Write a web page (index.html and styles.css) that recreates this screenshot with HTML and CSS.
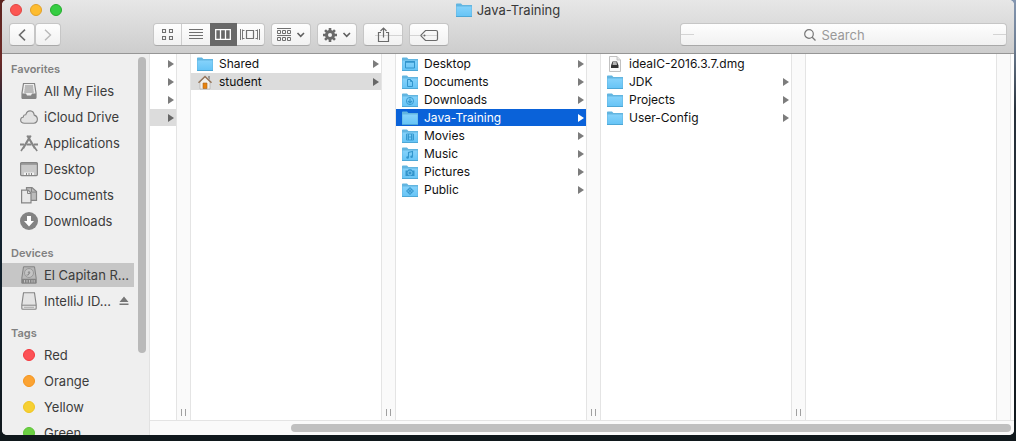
FILE: index.html
```html
<!DOCTYPE html>
<html lang="en">
<head>
<meta charset="utf-8">
<title>Java-Training</title>
<link rel="stylesheet" href="styles.css">
</head>
<body>
<svg class="sprites" aria-hidden="true">
  <defs>
    <linearGradient id="folder-fill" x1="0" y1="0" x2="0" y2="1"><stop offset="0" stop-color="#85d2fb"/><stop offset="1" stop-color="#66c4f6"/></linearGradient>
  </defs>
  <symbol id="folder" viewBox="0 0 16 14">
    <path d="M0 1.2Q0 .4.8.4H5l1.4 1.7H16V14H0z" fill="#62b5e0"/>
    <path d="M.5 3.5h15v9.8H.5z" fill="url(#folder-fill)"/>
    <path d="M0 13.5h16" stroke="#4da7d6"/>
  </symbol>
  <symbol id="arrow" viewBox="0 0 6 8"><path d="M0 0l6 4L0 8z" fill="currentColor"/></symbol>
</svg>
<main class="window">
  <header class="titlebar">
    <div class="title-row">
      <div class="lights">
        <button class="light close" aria-label="Close"></button>
        <button class="light minimize" aria-label="Minimize"></button>
        <button class="light zoom" aria-label="Zoom"></button>
      </div>
      <h1 class="title"><svg class="folder"><use href="#folder"/></svg>Java-Training</h1>
    </div>
    <div class="toolbar">
      <div class="nav">
        <button class="tool nav-button" aria-label="Back"><svg width="8" height="12" viewBox="0 0 8 12"><path d="M7 .7L1.500 6 7 11.300" fill="none" stroke="#6e6e6e" stroke-width="1.600"/></svg></button>
        <button class="tool nav-button" aria-label="Forward"><svg width="8" height="12" viewBox="0 0 8 12"><path d="M1 .7L6.500 6 1 11.300" fill="none" stroke="#b9b9b9" stroke-width="1.400"/></svg></button>
      </div>
      <div class="views">
        <button class="view" aria-label="Icon view"><svg width="11" height="11" viewBox="0 0 11 11"><path d="M.5.500h3v3h-3zM7.500.500h3v3h-3zM.5 7.500h3v3h-3zM7.500 7.500h3v3h-3z" fill="none" stroke="#707070" stroke-width="1.100"/></svg></button>
        <button class="view" aria-label="List view"><svg width="14" height="11" viewBox="0 0 14 11"><path d="M0 .5h14M0 3.500h14M0 6.500h14M0 9.500h14" stroke="#707070"/></svg></button>
        <button class="view active" aria-label="Column view" aria-pressed="true"><svg width="16" height="11" viewBox="0 0 16 11"><path d="M.7.7h14.600v9.600H.7zM5.500 1v9M10.500 1v9" fill="none" stroke="#fff" stroke-width="1.300"/></svg></button>
        <button class="view" aria-label="Cover flow view"><svg width="20" height="11" viewBox="0 0 20 11"><path d="M6.500 1.500h7v8h-7z" fill="none" stroke="#707070" stroke-width="1.200"/><path d="M.5 0v11M19.500 0v11M2.500 .5v10M17.500 .5v10M4.500 1.500h-2M4.500 9.500h-2M15.500 1.500h2M15.500 9.500h2" fill="none" stroke="#777"/></svg></button>
      </div>
      <button class="tool" aria-label="Arrange"><svg width="28" height="14" viewBox="0 0 28 14"><path d="M0 .5h14M0 7.500h14" stroke="#707070"/><path d="M.5 2.500h3v3h-3zM5.500 2.500h3v3h-3zM10.500 2.500h3v3h-3zM.5 9.500h3v3h-3zM5.500 9.500h3v3h-3zM10.500 9.500h3v3h-3z" fill="none" stroke="#707070"/><path d="M20.500 5l3.200 3.300L27 5" fill="none" stroke="#606060" stroke-width="1.600"/></svg></button>
      <button class="tool" aria-label="Action"><svg width="28" height="14" viewBox="0 0 28 14"><g stroke="#6a6a6a" stroke-width="2.600"><path d="M7 0v14M0 7h14M2.050 2.050l9.900 9.900M11.950 2.050l-9.900 9.900"/></g><circle cx="7" cy="7" r="5" fill="#6a6a6a"/><circle cx="7" cy="7" r="2" fill="#f4f4f4"/><path d="M20.500 5l3.200 3.300L27 5" fill="none" stroke="#606060" stroke-width="1.600"/></svg></button>
      <button class="tool share" aria-label="Share"><svg width="38" height="16" viewBox="0 0 38 16"><path d="M11 8.500h27" stroke="#d4d4d4"/><path d="M17 5.500h-2.500v9h10v-9H22" fill="none" stroke="#6a6a6a" stroke-width="1.200"/><path d="M19.500 10.500V1M16.500 4l3-3 3 3" fill="none" stroke="#6a6a6a" stroke-width="1.200"/></svg></button>
      <button class="tool share" aria-label="Edit tags"><svg width="38" height="16" viewBox="0 0 38 16"><path d="M0 8.500h27" stroke="#d4d4d4"/><path d="M15.500 3.500H26q1.500 0 1.500 1.500v7q0 1.500-1.500 1.500H15.500L11.200 9.200q-.6-.7 0-1.400z" fill="none" stroke="#6a6a6a" stroke-width="1.200"/><circle cx="14.500" cy="8.500" r="1" fill="#6a6a6a"/></svg></button>
      <label class="search">
        <svg width="12" height="12" viewBox="0 0 12 12"><circle cx="5" cy="5" r="4.300" fill="none" stroke="#777" stroke-width="1.200"/><path d="M8.200 8.200l3.300 3.300" stroke="#777" stroke-width="1.300"/></svg>
        <input type="text" placeholder="Search" aria-label="Search">
      </label>
    </div>
  </header>
  <div class="content">
    <nav class="sidebar">
      <div class="places">
        <section>
          <h2>Favorites</h2>
          <a class="place" href="#"><svg class="glyph" viewBox="0 0 18 18"><path d="M3.500 1.500h11L16 11v4.500q0 1-1 1H3q-1 0-1-1V11z" fill="#ededed" stroke="#858585" stroke-width="1.200"/><path d="M5 4h8M4.800 6h8.400M4.500 8h9M4.200 10h9.600" stroke="#858585"/><path d="M2 11.500h4l1 2h4l1-2h4v5H2z" fill="#858585"/></svg>All My Files</a>
          <a class="place" href="#"><svg class="glyph" viewBox="0 0 18 18"><path d="M4.500 15.200q-3.700 0-3.900-3.200.1-2.600 2.800-3 .1-2.400 2.400-2.300Q7 2.800 10.200 2.900q3.600.3 4 4.200 3.100.8 3.200 4-.2 3.900-3.700 4.100z" fill="#e2e2e2" stroke="#858585" stroke-width="1.100"/></svg>iCloud Drive</a>
          <a class="place" href="#"><svg class="glyph" viewBox="0 0 18 18"><path d="M7.300 1.500L15 14.500M10.700 1.500L3 14.500" stroke="#858585" stroke-width="2.200"/><path d="M0 10.500h4M6.500 10.500h5M14 10.500h4" stroke="#858585" stroke-width="2"/><path d="M3 14l-2 3M15 14l2.200 3" fill="none" stroke="#858585" stroke-width="1.600"/></svg>Applications</a>
          <a class="place" href="#"><svg class="glyph" viewBox="0 0 18 18"><rect x=".6" y="2.600" width="16.800" height="13" rx="1" fill="#c9c9c9" stroke="#858585" stroke-width="1.200"/><path d="M1 4h16" stroke="#777" stroke-width="1"/><path d="M4 15v-2.500h10V15z" fill="#f2f2f2"/><path d="M6.500 13v2M9 13v2M11.500 13v2" stroke="#858585"/></svg>Desktop</a>
          <a class="place" href="#"><svg class="glyph" viewBox="0 0 18 18"><path d="M6.500 1.600H12l4.500 4v8.800h-10z" fill="#bcbcbc" stroke="#858585" stroke-width="1.200"/><path d="M11.500 1.600v4.500h5" fill="none" stroke="#858585"/><path d="M1.600 4.100H8l3 3v9.800H1.600z" fill="#e8e8e8" stroke="#858585" stroke-width="1.200"/><path d="M7.500 4v3.500H11" fill="none" stroke="#858585"/></svg>Documents</a>
          <a class="place" href="#"><svg class="glyph" viewBox="0 0 18 18"><circle cx="9" cy="9" r="9" fill="#838383"/><path d="M7 4h4v5h3l-5 5.500L4 9h3z" fill="#fff"/></svg>Downloads</a>
        </section>
        <section>
          <h2>Devices</h2>
          <a class="place selected" href="#" aria-current="true"><svg class="glyph" viewBox="0 0 18 18"><path d="M3.500.8h11l1.700 11.400v5H1.800v-5z" fill="#b8b8b8" stroke="#828282"/><circle cx="9" cy="7" r="4.500" fill="#c4c4c4" stroke="#999"/><path d="M6.500 9q2 1 3-2" fill="none" stroke="#888"/><circle cx="9" cy="6.500" r="1.200" fill="#929292"/><path d="M2 12.800h14v4.200H2z" fill="#838383"/><path d="M4.500 14v2.500M7 14v2.500M9.500 14v2.500M12 14v2.500M14.200 14v2.500" stroke="#c0c0c0"/></svg>El Capitan R...</a>
          <a class="place" href="#"><svg class="glyph" viewBox="0 0 18 18"><path d="M3.500.8h11l1.700 12v3.500q0 1-1 1H2.800q-1 0-1-1v-3.500z" fill="#e4e4e4" stroke="#858585" stroke-width="1.100"/><path d="M2 13.200h14" stroke="#858585"/><path d="M4 15.300h10" stroke="#aaa"/></svg>IntelliJ ID...<svg class="eject" viewBox="0 0 10 10"><path d="M5 .5L9.500 6h-9zM.5 7.500h9v1.500h-9z" fill="#767676"/></svg></a>
        </section>
        <section>
          <h2>Tags</h2>
          <a class="place" href="#"><span class="tag red"></span>Red</a>
          <a class="place" href="#"><span class="tag orange"></span>Orange</a>
          <a class="place" href="#"><span class="tag yellow"></span>Yellow</a>
          <a class="place" href="#"><span class="tag green"></span>Green</a>
        </section>
      </div>
      <div class="side-scroll"></div>
    </nav>
    <div class="browser">
      <div class="columns">
        <div class="column clipped">
          <button class="row" aria-label="Folder 1"><svg class="arrow"><use href="#arrow"/></svg></button>
          <button class="row" aria-label="Folder 2"><svg class="arrow"><use href="#arrow"/></svg></button>
          <button class="row" aria-label="Folder 3"><svg class="arrow"><use href="#arrow"/></svg></button>
          <button class="row open" aria-label="Folder 4"><svg class="arrow"><use href="#arrow"/></svg></button>
        </div>
        <div class="divider"><i class="grip"></i></div>
        <div class="column">
          <button class="row"><svg class="folder"><use href="#folder"/></svg>Shared<svg class="arrow"><use href="#arrow"/></svg></button>
          <button class="row open"><svg class="file" viewBox="0 0 16 14"><path d="M3 7l5-5 5 5v7H3z" fill="#f2f0ec" stroke="#aaa" stroke-width=".6"/><path d="M11 1h2v4l-2-2z" fill="#999"/><path d="M1.500 7.800L8 1.500l6.500 6.300" fill="none" stroke="#96775c" stroke-width="1.600"/><path d="M6 8h4v5.500H6z" fill="#e8820c" stroke="#a86420" stroke-width=".6"/></svg>student<svg class="arrow"><use href="#arrow"/></svg></button>
        </div>
        <div class="divider"><i class="grip"></i></div>
        <div class="column">
          <button class="row"><svg class="folder" viewBox="0 0 16 14"><use href="#folder"/><path d="M3.500 4.500h9v6.500h-9z" fill="none" stroke="#3295cc"/><path d="M3 5h10" stroke="#3295cc" stroke-width="1.500"/></svg>Desktop<svg class="arrow"><use href="#arrow"/></svg></button>
          <button class="row"><svg class="folder" viewBox="0 0 16 14"><use href="#folder"/><path d="M5.500 4.500h3l2 2v5h-5zM8.500 4.500v2h2" fill="none" stroke="#3295cc"/></svg>Documents<svg class="arrow"><use href="#arrow"/></svg></button>
          <button class="row"><svg class="folder" viewBox="0 0 16 14"><use href="#folder"/><circle cx="8" cy="8" r="3.600" fill="none" stroke="#3295cc" stroke-width=".9"/><path d="M8 5.500v4M6 8l2 2 2-2" fill="none" stroke="#3295cc" stroke-width="1.200"/></svg>Downloads<svg class="arrow"><use href="#arrow"/></svg></button>
          <button class="row selected"><svg class="folder"><use href="#folder"/></svg>Java-Training<svg class="arrow"><use href="#arrow"/></svg></button>
          <button class="row"><svg class="folder" viewBox="0 0 16 14"><use href="#folder"/><path d="M4.500 5h7v6h-7zM6.500 5v6M9.500 5v6M4.500 7h2M4.500 9h2M9.500 7h2M9.500 9h2M6.500 8h3" fill="none" stroke="#3295cc" stroke-width=".9"/></svg>Movies<svg class="arrow"><use href="#arrow"/></svg></button>
          <button class="row"><svg class="folder" viewBox="0 0 16 14"><use href="#folder"/><path d="M6.500 10.500V5.500l4-1v5" fill="none" stroke="#3295cc" stroke-width="1.100"/><circle cx="5.600" cy="10.500" r="1.300" fill="#3295cc"/><circle cx="9.600" cy="9.700" r="1.300" fill="#3295cc"/></svg>Music<svg class="arrow"><use href="#arrow"/></svg></button>
          <button class="row"><svg class="folder" viewBox="0 0 16 14"><use href="#folder"/><path d="M3.500 5.500h2.200l1-1.300h2.600l1 1.300h2.200V11h-9z" fill="#3295cc"/><circle cx="8" cy="8" r="2" fill="#3295cc" stroke="#7dcbf5" stroke-width=".9"/></svg>Pictures<svg class="arrow"><use href="#arrow"/></svg></button>
          <button class="row"><svg class="folder" viewBox="0 0 16 14"><use href="#folder"/><path d="M8 4l4 4-4 4-4-4z" fill="#3295cc"/><path d="M8 5.500v5M5.500 8h5" stroke="#7dcbf5" stroke-width="1"/><circle cx="8" cy="8" r="1" fill="#3295cc"/></svg>Public<svg class="arrow"><use href="#arrow"/></svg></button>
        </div>
        <div class="divider"><i class="grip"></i></div>
        <div class="column">
          <button class="row"><svg class="file" viewBox="0 0 16 16"><path d="M2.500.5h7.500l3.500 3.500v11.500h-11z" fill="#fafafa" stroke="#bababa" stroke-width=".9"/><path d="M10 .5V4h3.500" fill="#e4e4e4" stroke="#bababa" stroke-width=".8"/><path d="M5.500 5.500h4.500l1.500 4v2.500H4V9.500z" fill="#333"/><path d="M6 6h3.500L10 9H5.500z" fill="#b4b4b4"/></svg>ideaIC-2016.3.7.dmg</button>
          <button class="row"><svg class="folder"><use href="#folder"/></svg>JDK<svg class="arrow"><use href="#arrow"/></svg></button>
          <button class="row"><svg class="folder"><use href="#folder"/></svg>Projects<svg class="arrow"><use href="#arrow"/></svg></button>
          <button class="row"><svg class="folder"><use href="#folder"/></svg>User-Config<svg class="arrow"><use href="#arrow"/></svg></button>
        </div>
        <div class="divider"><i class="grip"></i></div>
        <div class="column last"></div>
        <div class="divider"></div>
      </div>
      <div class="scroller"><div class="thumb"></div></div>
    </div>
  </div>
</main>
</body>
</html>
```

FILE: styles.css
```css
* { box-sizing: border-box; }

body {
  margin: 0;
  padding: 0 2px 6px;
  height: 100vh;
  overflow: hidden;
  font-family: Inter, "Liberation Sans", sans-serif;
  font-size: 12px;
  color: #111;
  background:
    linear-gradient(#8496b0 0, #6c7c90 50px, #28323c 110px, #10181c 100%) right / 50% 100% no-repeat,
    linear-gradient(#5c2420 0, #6c2a28 60px, #1c2838 110px, #10202c 60%, #10181c 100%);
}

button {
  margin: 0;
  padding: 0;
  border: 0;
  font: inherit;
  color: inherit;
}

svg { display: block; flex: none; }

.sprites { position: absolute; width: 0; height: 0; }

.window {
  display: flex;
  flex-direction: column;
  height: 100%;
  overflow: hidden;
  border-radius: 5px;
  background: #fff;
}

.titlebar {
  flex: none;
  padding: 0 7px 7px;
  border-bottom: 1px solid #969696;
  background: linear-gradient(#e7e7e7, #cdcdcd);
}

.title-row {
  display: grid;
  grid-template-columns: 1fr auto 1fr;
  align-items: center;
  height: 20px;
}

.lights { display: flex; gap: 8px; padding: 0 1px; }

.light { width: 12px; height: 12px; border-radius: 50%; }
.close { background: #fc5753; border: 1px solid #e04542; }
.minimize { background: #fdbc2f; border: 1px solid #e0a028; }
.zoom { background: #35cd42; border: 1px solid #24ac2c; }

.title {
  display: flex;
  align-items: center;
  gap: 5px;
  margin: 0;
  font-size: 13px;
  font-weight: 400;
  line-height: 20px;
  color: #383838;
}

.toolbar { display: flex; margin-top: 3px; height: 23px; }

.nav { display: flex; margin-right: 92px; }

.tool, .view, .search {
  display: flex;
  align-items: center;
  justify-content: center;
  background: linear-gradient(#fefefe, #f1f1f1);
}

.tool, .views, .search {
  border: 1px solid #c6c6c6;
  border-bottom-color: #a9a9a9;
  border-radius: 4px;
}

.tool { width: 40px; margin-right: 6px; }
.nav .nav-button { width: 26px; margin: 0; }

.views { display: flex; width: 112px; margin-right: 6px; overflow: visible; }
.view { flex: 1; border-left: 1px solid #cdcdcd; }
.view:first-child { border: 0; border-radius: 3px 0 0 3px; }
.view:last-child { border: 0; border-radius: 0 3px 3px 0; }
.view.active { margin: -1px 0; border: 0; background: #686868; }

.search {
  flex: 1;
  gap: 6px;
  margin-left: 225px;
  background:
    linear-gradient(#d4d4d4, #d4d4d4) left / 13px 1px no-repeat,
    linear-gradient(#d4d4d4, #d4d4d4) right / 13px 1px no-repeat,
    linear-gradient(#fefefe, #f1f1f1);
}

.search input {
  width: 62px;
  padding: 0;
  border: 0;
  outline: 0;
  background: none;
  font: inherit;
  font-size: 13px;
}

.search input::placeholder { color: #999; opacity: 1; }

.content { display: flex; flex: 1; min-height: 0; }

.sidebar {
  display: flex;
  flex: none;
  width: 148px;
  padding-right: 3px;
  border-right: 1px solid #e2e2e2;
  background: #efefef;
  overflow: hidden;
}

.places {
  display: flex;
  flex-direction: column;
  gap: 10px;
  width: 132px;
  margin-right: 4px;
  padding-top: 6px;
}

.places h2 {
  margin: 0 0 1px;
  padding-left: 9px;
  font-size: 11px;
  font-weight: 600;
  line-height: 18px;
  color: #808080;
}

.place {
  display: flex;
  align-items: center;
  gap: 6px;
  height: 24px;
  margin-bottom: 2px;
  padding-left: 18px;
  font-size: 13px;
  white-space: nowrap;
  color: #3c3c3c;
  text-decoration: none;
}

.place:last-child { margin-bottom: 1px; }
.place.selected { background: #c6c6c6; }

.glyph { width: 18px; height: 18px; }
.eject { width: 10px; height: 10px; margin: 0 5px 0 auto; }

.tag { width: 12px; height: 12px; margin: 0 3px; border: 1px solid; border-radius: 50%; }
.red { background: #fc5256; border-color: #f5383e; }
.orange { background: #fba333; border-color: #f5941c; }
.yellow { background: #f6d033; border-color: #f0c520; }
.green { background: #6cd044; border-color: #5cc434; }

.side-scroll {
  flex: 1;
  height: 296px;
  margin-top: 3px;
  border-radius: 4px;
  background: #b9b9b9;
}

.browser { display: flex; flex: 1; flex-direction: column; min-width: 0; }

.columns { display: flex; flex: 1; min-height: 0; padding-right: 3px; }

.column { flex: none; width: 190px; padding-top: 1px; }
.column.clipped { width: 26px; }
.column.last { flex: 1; }

.row {
  display: flex;
  align-items: center;
  gap: 6px;
  width: 100%;
  height: 17px;
  margin-bottom: 1px;
  padding: 0 2px 0 6px;
  background: none;
  line-height: 17px;
  text-align: left;
  white-space: nowrap;
}

.row.open { background: #dcdcdc; }
.row.selected { background: #0a62d9; color: #fff; }

.folder { width: 16px; height: 14px; }
.file { width: 16px; height: 16px; }

.arrow { width: 6px; height: 8px; margin-left: auto; color: #7c7c7c; }
.open .arrow { color: #666; }
.selected .arrow { color: #fff; }

.divider {
  display: flex;
  flex: none;
  align-items: flex-end;
  justify-content: center;
  width: 15px;
  padding-bottom: 4px;
  border: solid #e4e4e4;
  border-width: 0 1px;
  background: #fafafa;
}

.grip { width: 5px; height: 7px; border: solid #a0a0a0; border-width: 0 1px; }

.scroller {
  flex: none;
  padding: 3px 3px 3px 141px;
  border-top: 1px solid #e4e4e4;
  background: #fafafa;
}

.thumb { height: 8px; border-radius: 4px; background: #c0c0c0; }
```
